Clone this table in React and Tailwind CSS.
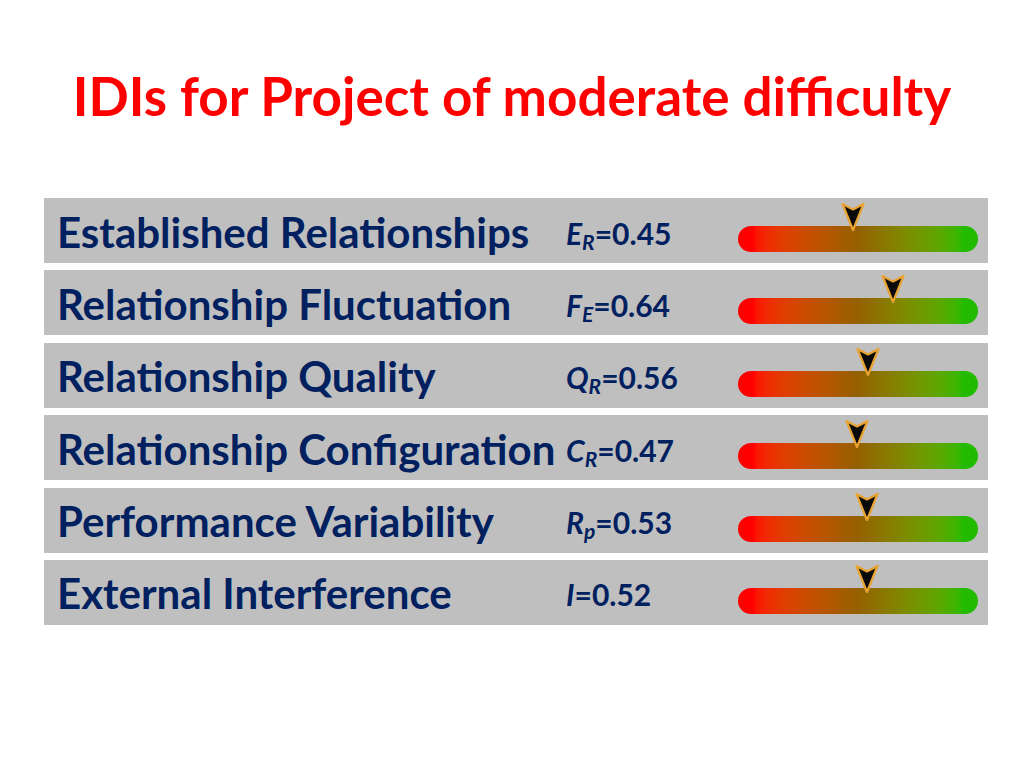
const rows = [
  { label: "Established Relationships", sym: "E", sub: "R", value: "0.45", tip: 115 },
  { label: "Relationship Fluctuation", sym: "F", sub: "E", value: "0.64", tip: 155 },
  { label: "Relationship Quality", sym: "Q", sub: "R", value: "0.56", tip: 130 },
  { label: "Relationship Configuration", sym: "C", sub: "R", value: "0.47", tip: 119 },
  { label: "Performance Variability", sym: "R", sub: "p", value: "0.53", tip: 129 },
  { label: "External Interference", sym: "I", sub: null, value: "0.52", tip: 129 },
];

function Marker({ tip }) {
  // downward arrowhead with notched top
  return (
    <svg
      className="absolute top-[-24px]"
      style={{ left: tip - 12 }}
      width="24"
      height="30"
      viewBox="0 0 24 30"
    >
      <path
        d="M1.5 2 L12 7.5 L22.5 2 L12 28 Z"
        fill="#0a0a0a"
        stroke="#e9a332"
        strokeWidth="2.2"
        strokeLinejoin="round"
      />
    </svg>
  );
}

export default function App() {
  return (
    <div
      className="w-[1024px] h-[768px] bg-white flex flex-col"
      style={{ fontFamily: "Lato, 'Open Sans', sans-serif" }}
    >
      <h1 className="pt-[64px] text-center text-[53px] leading-[64px] font-bold text-[#ff0000]">
        IDIs for Project of moderate difficulty
      </h1>

      <div className="mt-[70px] ml-[44px] w-[944px] flex flex-col gap-[7.4px]">
        {rows.map((r) => (
          <div key={r.label} className="h-[65px] bg-[#bfbfbf] flex items-center">
            <div className="w-[522px] pl-[13px] pt-[2px] text-[42px] leading-none font-bold text-[#002060] whitespace-nowrap">
              {r.label}
            </div>
            <div className="w-[172px] pt-[4px] text-[30px] leading-none font-bold text-[#002060] whitespace-nowrap">
              <span className="italic">{r.sym}</span>
              {r.sub && (
                <sub className="italic text-[21px] relative top-[5px]">{r.sub}</sub>
              )}
              ={r.value}
            </div>
            <div className="relative self-start mt-[28px] w-[240px] h-[26px] rounded-full bg-gradient-to-r from-[#ff0000] from-[6%] via-[#946000] to-[#22bb00] to-[94%]">
              <Marker tip={r.tip} />
            </div>
          </div>
        ))}
      </div>
    </div>
  );
}
